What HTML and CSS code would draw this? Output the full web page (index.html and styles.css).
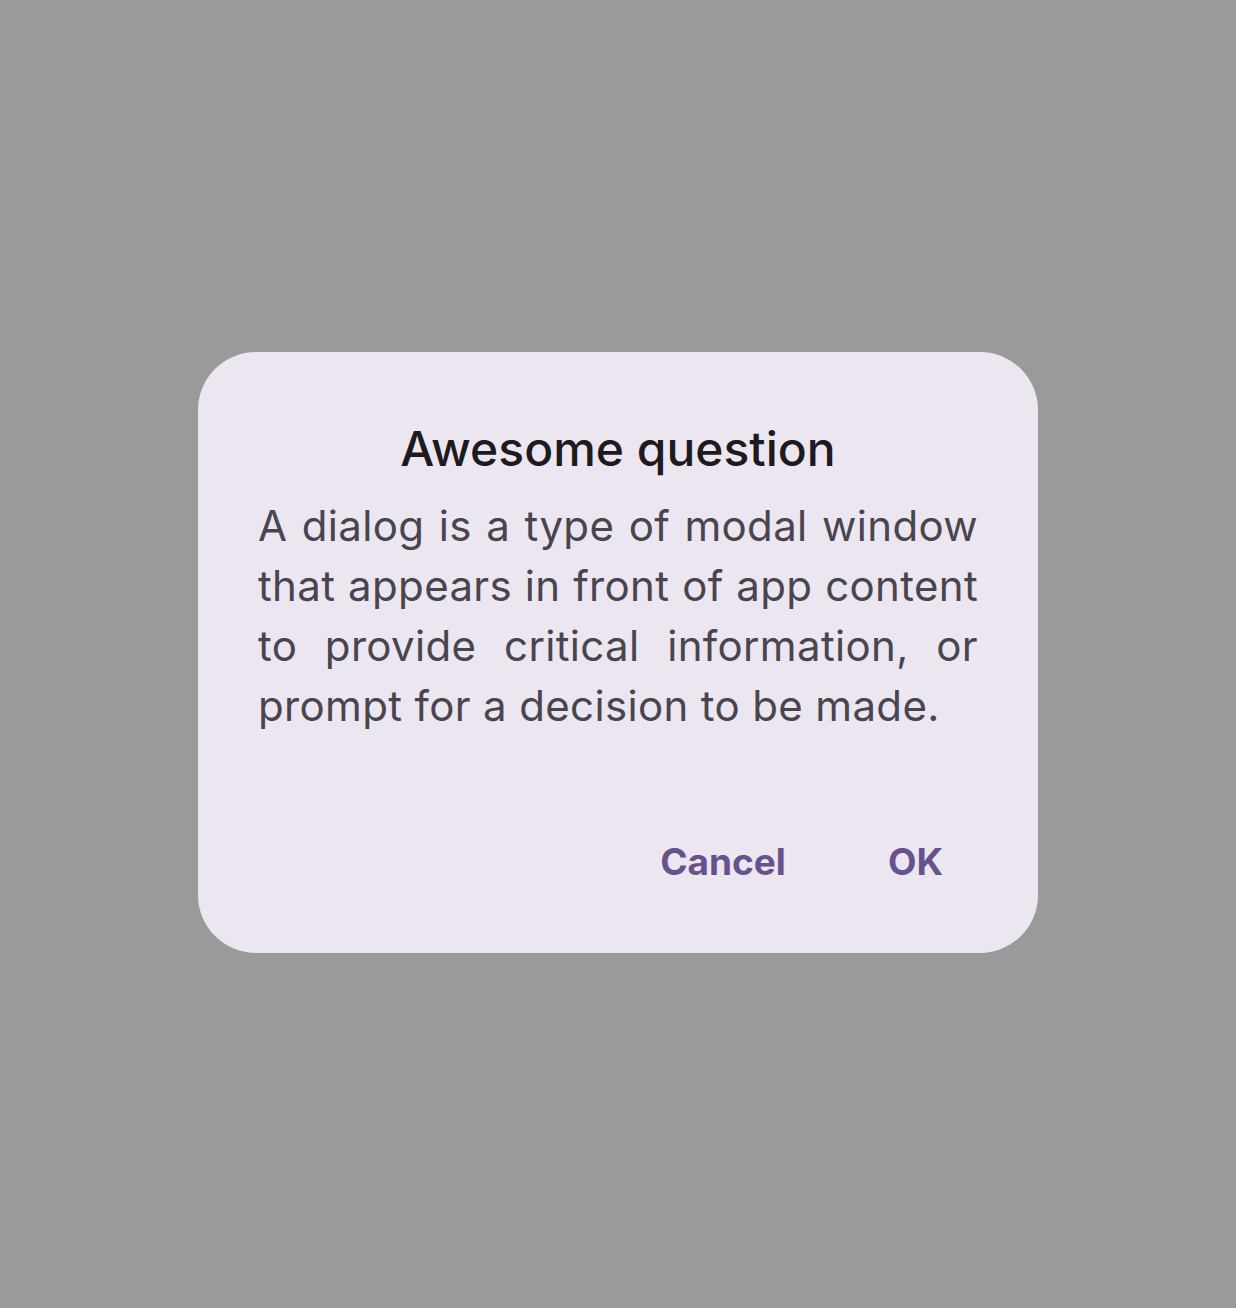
FILE: index.html
```html
<!DOCTYPE html>
<html>
<head>
<meta charset="utf-8">
<link rel="stylesheet" href="styles.css">
</head>
<body>
<div class="scrim">
  <div class="dialog">
    <h1 class="title">Awesome question</h1>
    <p class="body">A dialog is a type of modal window that appears in front of app content to provide critical information, or prompt for a decision to be made.</p>
    <div class="actions">
      <button class="btn">Cancel</button>
      <button class="btn">OK</button>
    </div>
  </div>
</div>
</body>
</html>
```
FILE: styles.css
```css
html, body {
  margin: 0;
  padding: 0;
}
body {
  background: #9a9a9a;
  font-family: Inter, "Noto Sans", sans-serif;
}
.scrim {
  width: 1236px;
  height: 1308px;
  display: flex;
  justify-content: center;
  align-items: flex-start;
}
.dialog {
  margin-top: 352px;
  width: 840px;
  box-sizing: border-box;
  background: #ece6f0;
  border-radius: 58px;
  padding: 65px 60px 67px 60px;
  display: flex;
  flex-direction: column;
}
.title {
  margin: 0;
  font-size: 48px;
  line-height: 64px;
  font-weight: 500;
  color: #1d1b20;
  text-align: center;
}
.body {
  margin: 15px 0 0 0;
  font-size: 42px;
  line-height: 60px;
  letter-spacing: 0.35px;
  color: #49454f;
  text-align: justify;
}
.actions {
  margin-top: 102px;
  display: flex;
  justify-content: flex-end;
  gap: 22px;
  margin-right: -5px;
}
.btn {
  border: 0;
  background: none;
  padding: 0 40px;
  font-family: Inter, "Noto Sans", sans-serif;
  font-size: 37px;
  line-height: 48px;
  font-weight: 700;
  color: #67528e;
}
```
